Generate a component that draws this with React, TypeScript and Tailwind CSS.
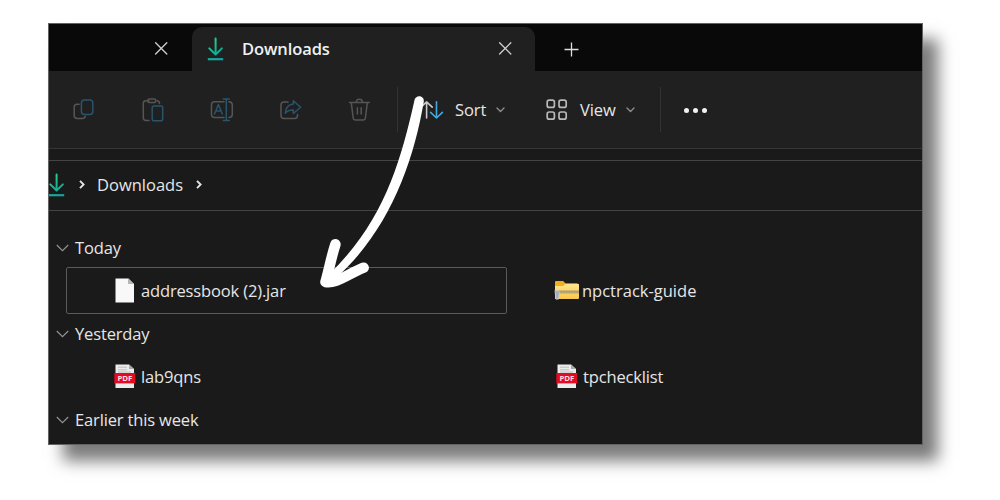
import type { ReactNode } from "react";

function DownloadIcon() {
  return (
    <svg width="17" height="24" viewBox="0 0 17 24" fill="none" strokeLinecap="round" strokeLinejoin="round" strokeWidth="2" className="shrink-0">
      <defs>
        <linearGradient id="dl" x1="0" y1="0" x2="17" y2="24" gradientUnits="userSpaceOnUse">
          <stop offset="0" stopColor="#35d98b" />
          <stop offset="0.6" stopColor="#14ae96" />
          <stop offset="1" stopColor="#1c99a6" />
        </linearGradient>
      </defs>
      <path d="M8.6 1.5V17.2M2.3 11.4L8.6 17.5L14.9 11.4" stroke="url(#dl)" />
      <path d="M0.8 22.2H16.2" stroke="url(#dl)" strokeLinecap="butt" strokeWidth="2.2" />
    </svg>
  );
}

function CloseIcon() {
  return (
    <svg width="14" height="14" viewBox="0 0 14 14" stroke="#d0d0d0" strokeWidth="1.3" strokeLinecap="round" className="shrink-0">
      <path d="M1.6 0.8L12.8 12M12.8 0.8L1.6 12" />
    </svg>
  );
}

function Chevron() {
  return (
    <svg width="9" height="6" viewBox="0 0 9 6" fill="none" stroke="#8d8d8d" strokeWidth="1.4" strokeLinecap="round" strokeLinejoin="round" className="block shrink-0">
      <path d="M1 1L4.5 4.5L8 1" />
    </svg>
  );
}

function Crumb() {
  return (
    <svg width="6" height="10" viewBox="0 0 6 10" fill="none" stroke="#e4e4e4" strokeWidth="1.9" className="block shrink-0">
      <path d="M1 0.8L4.6 4.5L1 8.2" />
    </svg>
  );
}

function ToolIcon({ children }: { children: ReactNode }) {
  return (
    <svg width="24" height="24" viewBox="0 0 24 24" fill="none" strokeWidth="1.5" strokeLinecap="round" strokeLinejoin="round" stroke="#555555" className="shrink-0">
      {children}
    </svg>
  );
}

function PdfIcon() {
  return (
    <svg width="22" height="25" viewBox="0 0 22 25" className="shrink-0">
      <path d="M1.5 0.5H15L20 5V24H1.5Z" fill="#ececec" />
      <path d="M15 0.5V5H20Z" fill="#aaaaaa" />
      <path d="M4 3.2H13M4 5.8H13M4 8H17" stroke="#b2b2b2" strokeWidth="0.8" />
      <path d="M0.3 9H21.3V19.4H0.3Z" fill="#e30b22" />
      <text x="10.8" y="16.7" textAnchor="middle" fill="#ffdfe2" fontSize="6.5" fontWeight="700" textLength="14.5" lengthAdjust="spacingAndGlyphs" fontFamily="Open Sans, sans-serif">PDF</text>
    </svg>
  );
}

function FolderIcon() {
  return (
    <svg width="26" height="21" viewBox="0 0 26 21" className="shrink-0">
      <defs>
        <linearGradient id="folder" x1="0" y1="0" x2="0" y2="1">
          <stop offset="0" stopColor="#ffe48b" />
          <stop offset="1" stopColor="#f8c84c" />
        </linearGradient>
      </defs>
      <path d="M1 2Q1 1 2 1H9.2L11.6 3.4H23V7H1Z" fill="#f0ad1c" />
      <path d="M1 6H9.3L11.2 3.8H24Q25 3.8 25 4.8V18Q25 19 24 19H1Z" fill="url(#folder)" />
      <path d="M1 10.6H25V13.6H1Z" fill="#d0b878" />
      <path d="M4 11.2H25" stroke="#a09068" strokeWidth="0.9" />
      <path d="M4 12.8H25" stroke="#8f8a78" strokeWidth="0.8" strokeDasharray="1 0.6" />
      <path d="M0.8 10.5H4.5L5.5 13L4.4 19.2H2Z" fill="#a9aeb7" stroke="#d2d2d2" strokeWidth="0.6" />
    </svg>
  );
}

function GroupHeader({ children }: { children: ReactNode }) {
  return (
    <div className="flex h-[43px] items-center pl-[8px]">
      <svg width="13" height="8" viewBox="0 0 13 8" fill="none" stroke="#929292" strokeWidth="1.2" className="shrink-0">
        <path d="M0.8 1L6.5 6.6L12.2 1" />
      </svg>
      <span className="ml-[6px]">{children}</span>
    </div>
  );
}

export default function App() {
  return (
    <div className="h-[500px] w-[1000px] overflow-hidden bg-white pt-[23px] pl-[48px] font-['Open_Sans','Noto_Sans',sans-serif] text-[16.5px] leading-[22px] text-[#e6e6e6]">
      <div className="relative flex h-[421.5px] w-[874.5px] flex-col bg-[#1a1a1a] shadow-[15px_16px_15px_0px_rgba(0,0,0,0.52)] outline-1 -outline-offset-1 outline-[#626262]">
        <div className="flex h-[48px] shrink-0 bg-[#090909] pt-[4px]">
          <div className="flex w-[144px] items-center justify-end pr-[24px]">
            <CloseIcon />
          </div>
          <div className="flex w-[343px] items-center rounded-t-[10px] bg-[#202020] pr-[23px] pl-[15px]">
            <DownloadIcon />
            <span className="mr-auto ml-[18px] font-semibold tracking-[-0.1px] text-[#f0f0f0]">Downloads</span>
            <CloseIcon />
          </div>
          <div className="flex items-center pl-[29px]">
            <svg width="15" height="15" viewBox="0 0 15 15" stroke="#dddddd" strokeWidth="1.3">
              <path d="M0.5 7.5H14.5M7.5 0.5V14.5" />
            </svg>
          </div>
        </div>

        <div className="flex h-[78px] shrink-0 items-center border-b border-[#363636] bg-[#202020] pl-[24px]">
          <div className="flex items-center gap-[45px]">
            <ToolIcon>
              <path d="M7.2 6.2H5Q2.2 6.2 2.2 9V17.5Q2.2 20.5 5.2 20.5H10Q13 20.5 13.3 18.2" />
              <rect x="9.4" y="2" width="11.4" height="14.6" rx="3" stroke="#29546b" />
            </ToolIcon>
            <ToolIcon>
              <path d="M8 2.7H5Q2.3 2.7 2.3 5.2V19.5Q2.3 22.5 5 22.5H8M16 2.7Q18.5 2.7 18.5 5.5" />
              <rect x="6.8" y="1" width="8" height="3.5" rx="1.5" />
              <rect x="11.2" y="8" width="10.5" height="14.7" rx="1.8" stroke="#29546b" />
            </ToolIcon>
            <ToolIcon>
              <path d="M14 3.8H4.5Q1.5 3.8 1.5 6.8V16.5Q1.5 19.5 4.5 19.5H14M19 3.8Q22.3 4 22.3 7V16.5Q22.3 19.2 19 19.5" />
              <path d="M13.3 1H19.3M16.3 1V22.5M13.3 22.5H19.3M4.5 16L8.4 6.5L12.3 16M5.8 12.9H11" stroke="#29546b" />
            </ToolIcon>
            <ToolIcon>
              <path d="M9 4H5Q2 4 2 7V17.5Q2 20.5 5 20.5H15.5Q18.5 20.5 18.5 17.5V16.5" />
              <path d="M14.3 6V2.8L21.6 9.3L14.3 15.5V12Q9 11.8 6.2 15.2Q7 6.8 14.3 6Z" stroke="#29546b" />
            </ToolIcon>
            <ToolIcon>
              <path d="M1.5 4.5H21.3M8.3 4.5Q8.3 1.3 11.4 1.3T14.5 4.5M3.3 4.8L5.2 20Q5.5 22 7.5 22H15.1Q17.1 22 17.4 20L19.3 4.8M9.4 9.8V16M13.2 9.8V16" />
            </ToolIcon>
          </div>
          <div className="ml-[25px] h-[45px] w-px bg-[#333333]" />
          <svg width="25" height="20" viewBox="0 0 25 20" fill="none" strokeWidth="1.6" strokeLinecap="round" strokeLinejoin="round" className="ml-[22px] shrink-0">
            <path d="M6.6 18V1.8M1 7.2L6.6 1.8L12.2 7.2" stroke="#c9c9c9" />
            <path d="M16.5 1.8V18M10.6 12.4L16.5 18L22.4 12.4" stroke="#44a9df" />
          </svg>
          <span className="mt-[1px] ml-[10px] w-[32px] tracking-[-0.1px]">Sort</span>
          <span className="ml-[9px]"><Chevron /></span>
          <svg width="22" height="22" viewBox="0 0 22 22" fill="none" stroke="#b8b8b8" strokeWidth="1.7" className="ml-[41px] shrink-0">
            <rect x="1.2" y="1.2" width="7.2" height="7.2" rx="2" />
            <rect x="13" y="1.2" width="7.2" height="7.2" rx="2" />
            <rect x="1.2" y="13" width="7.2" height="7.2" rx="2" />
            <rect x="13" y="13" width="7.2" height="7.2" rx="2" />
          </svg>
          <span className="mt-[1px] ml-[12px] w-[37px] tracking-[-0.1px]">View</span>
          <span className="ml-[9px]"><Chevron /></span>
          <div className="ml-[25px] h-[45px] w-px bg-[#333333]" />
          <div className="mt-[2px] ml-[23px] flex gap-[4px]">
            <i className="size-[5px] rounded-full bg-[#f2f2f2]" />
            <i className="size-[5px] rounded-full bg-[#f2f2f2]" />
            <i className="size-[5px] rounded-full bg-[#f2f2f2]" />
          </div>
        </div>

        <div className="mt-[11px] flex h-[51px] shrink-0 items-center border-t border-b border-[#444444]">
          <div className="-mt-[1px] flex items-center">
            <DownloadIcon />
            <span className="ml-[14px]"><Crumb /></span>
            <span className="ml-[12px] w-[86px] tracking-[0px]">Downloads</span>
            <span className="ml-[13px]"><Crumb /></span>
          </div>
        </div>

        <div className="mt-[15px] tracking-[-0.15px]">
          <GroupHeader>Today</GroupHeader>
          <div className="flex h-[43px] items-center pl-[18px]">
            <div className="-my-[2px] flex h-[47px] w-[441px] items-center rounded-[2px] border border-[#5a5a5a] pl-[48px]">
              <svg width="20" height="25" viewBox="0 0 20 25" className="shrink-0">
                <path d="M0.5 0.5H13.5L19 6V24.5H0.5Z" fill="#f8f8f8" />
                <path d="M13 0.5V6H19Z" fill="#b5b5b5" />
              </svg>
              <span className="ml-[6px]">addressbook (2).jar</span>
            </div>
            <div className="ml-[47px] flex items-center">
              <FolderIcon />
              <span className="ml-[2px] tracking-[0px]">npctrack-guide</span>
            </div>
          </div>
          <GroupHeader>Yesterday</GroupHeader>
          <div className="flex h-[43px] items-center pl-[66px]">
            <div className="flex w-[442px] items-center">
              <PdfIcon />
              <span className="ml-[5px]">lab9qns</span>
            </div>
            <PdfIcon />
            <span className="ml-[5px]">tpchecklist</span>
          </div>
          <GroupHeader>Earlier this week</GroupHeader>
        </div>

        <svg width="120" height="210" viewBox="310 85 120 210" fill="#ffffff" stroke="#ffffff" strokeLinecap="round" strokeLinejoin="round" className="absolute top-[62px] left-[262px]">
          <path stroke="none" d="M414.3 101C415 94.5 424.3 95 423.8 101.5C413 165 388 232 335 279L325 281L327 276C382 225 400 165 414.3 101Z" />
          <path d="M335.4 244.3C331 258 329 270 325.5 282C336 284 346 275 363.6 267.7" fill="none" strokeWidth="10.6" />
          <path d="M325.5 282.5L332 272L339 277Z" strokeWidth="6" />
        </svg>
      </div>
    </div>
  );
}
